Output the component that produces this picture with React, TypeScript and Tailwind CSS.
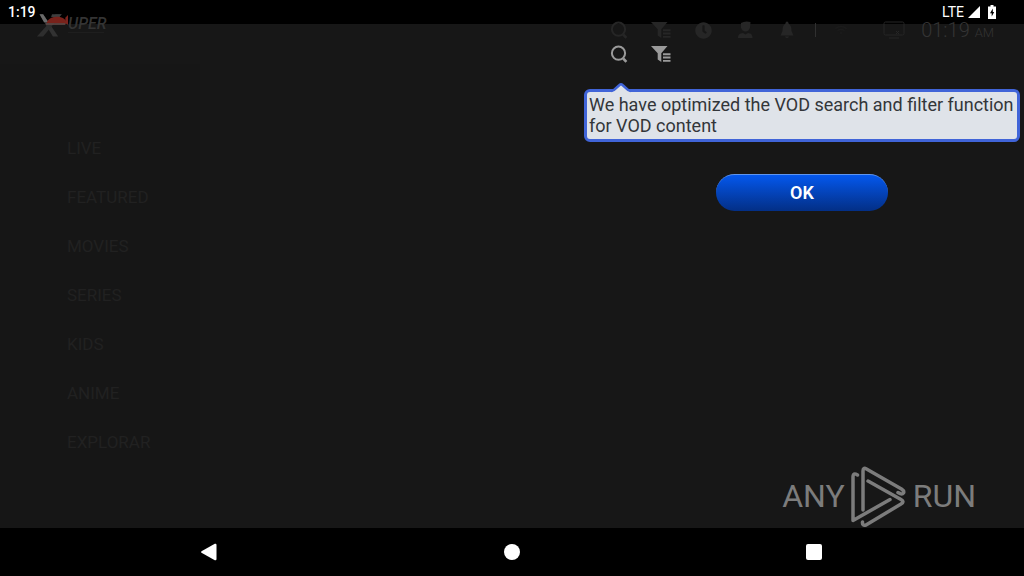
import { FaClock, FaWifi } from "react-icons/fa";

const menuItems = [
  "LIVE",
  "FEATURED",
  "MOVIES",
  "SERIES",
  "KIDS",
  "ANIME",
  "EXPLORAR",
];

const SearchIcon = () => (
  <svg className="h-5 w-5" viewBox="0 0 20 20" fill="none" stroke="currentColor">
    <circle cx="9.5" cy="9.2" r="6.6" strokeWidth="2" />
    <path d="M14.2 14.5L17.4 17.8" strokeWidth="2.6" />
  </svg>
);

const FilterIcon = () => (
  <svg className="h-5 w-5" viewBox="0 0 20 20" fill="currentColor">
    <path d="M0 2H16.5L10.3 9.3V18L6.7 15.5V9.3Z" />
    <path d="M12 9.3H19.5V11.2H12ZM12 12.6H19.5V14.5H12ZM12 15.9H19.5V17.8H12Z" />
  </svg>
);

const UserIcon = () => (
  <svg className="h-5 w-5" viewBox="0 0 20 20" fill="currentColor">
    <path d="M6 3Q10 0.5 15.5 2L15 7.5C14.5 10 12.5 11.500 10.5 11.5S6.500 10 6 7.5Z" />
    <path d="M3 18C3 14.5 5 13.4 8 13L10.5 14.5L13 13C16 13.4 17.500 14.5 17.5 18Z" />
  </svg>
);

const BellIcon = () => (
  <svg className="h-5 w-5" viewBox="0 0 20 20" fill="currentColor">
    <path d="M10 1.500C11 1.500 11.500 2.500 11.500 3.500C14 5 14.500 8 14.500 11L16.500 15.500H3.500L5.500 11C5.500 8 6 5 8.500 3.500C8.500 2.500 9 1.500 10 1.500Z" />
    <path d="M8 16.500H12Q11.500 18 10 18T8 16.500Z" />
  </svg>
);

const MonitorIcon = () => (
  <svg className="h-5 w-[22px]" viewBox="0 0 22 20" fill="none" stroke="currentColor">
    <rect x="1" y="2" width="20" height="13" rx="1.5" />
    <path d="M6 18H16M13 11L16 14M16 11L13 14" />
  </svg>
);

const XuperLogo = () => (
  <div className="flex items-start" aria-label="Xuper">
    <svg className="h-8 w-8" viewBox="0 0 36 32">
      <path d="M4 5H8L25 30H19Z" fill="#323232" />
      <path d="M22 5H29L8 30H1L12 18Z" fill="#2e2e2e" />
      <path d="M4 5H8L14 14H9Z" fill="#6a6a6a" />
      <path d="M18 5H29L26 8H17Z" fill="#3e3e3e" />
      <path d="M12 15C13 9 21 7 27 8C32 9 34 12 35 16L12 15Z" fill="#78221b" />
      <path d="M33 9L36 6V17L33 14Z" fill="#7a241e" />
      <path d="M11 16H33" stroke="#5a4644" strokeWidth="2" />
    </svg>
    <div className="flex flex-col pt-2 text-[#343434]">
      <span className="text-base leading-4 font-medium italic">UPER</span>
      <span className="h-px w-9 bg-[#1e1e1e]" />
    </div>
  </div>
);

const StatusBar = () => (
  <div className="absolute inset-x-0 top-0 flex h-6 items-center bg-black pr-7 pl-2 text-sm text-white">
    <span className="font-medium">1:19</span>
    <div className="ml-auto flex items-center gap-1">
      <span>LTE</span>
      <svg className="h-3 w-3" viewBox="0 0 12 12" fill="currentColor">
        <path d="M12 0V12H0Z" />
      </svg>
      <svg className="ml-1 h-[14px] w-2" viewBox="0 0 8 14">
        <path d="M2.5 0H5.5V1.5H8V14H0V1.5H2.5Z" fill="white" />
        <path d="M4.8 3.5L2 8.2H3.7V11.5L6.2 7H4.8Z" fill="black" />
      </svg>
    </div>
  </div>
);

const Header = () => (
  <header className="relative flex items-start justify-between pt-2 pr-[30px] pl-9 text-[#262626]">
    <XuperLogo />
    <div className="flex h-11 items-center">
      {[
        { label: "Search", icon: <SearchIcon /> },
        { label: "Filter", icon: <FilterIcon /> },
        { label: "History", icon: <FaClock className="h-[17px] w-[17px]" /> },
        { label: "Account", icon: <UserIcon /> },
        { label: "Notifications", icon: <BellIcon /> },
      ].map((action) => (
        <button
          key={action.label}
          aria-label={action.label}
          className="flex w-[42px] justify-center"
        >
          {action.icon}
        </button>
      ))}
      <span className="mx-[7px] h-[14px] w-px bg-[#303030]" />
      <FaWifi className="mx-3 h-3 w-3 text-[#1b1b1b]" />
      <span className="mr-4 ml-6">
        <MonitorIcon />
      </span>
      <span className="text-xl font-light text-[#343434]">
        01:19 <span className="text-[13px]">AM</span>
      </span>
    </div>
  </header>
);

const SideMenu = () => (
  <nav className="w-[200px] bg-[#161616] pt-[72px] pl-[67px]">
    <ul>
      {menuItems.map((item) => (
        <li key={item} className="h-[49px]">
          <a href="#" className="text-[17px] leading-6 text-[#212121]">
            {item}
          </a>
        </li>
      ))}
    </ul>
  </nav>
);

// Feature hint shown over the dimmed home screen
const SearchTip = () => (
  <div
    role="dialog"
    aria-label="Search and filter"
    className="absolute top-11 right-1 flex w-[436px] flex-col"
  >
    <div className="flex pl-[14px] text-[#9a9a9a]">
      <span className="flex w-[42px] justify-center">
        <SearchIcon />
      </span>
      <span className="flex w-[42px] justify-center">
        <FilterIcon />
      </span>
    </div>
    <div className="relative mt-[25px] rounded-md border-[3px] border-[#4064d8] bg-[#dfe3e9] px-[2px] pt-[2px] pb-[3px]">
      <svg
        className="absolute -top-[10px] left-6 h-[11px] w-[20px]"
        viewBox="0 0 20 11"
      >
        <path d="M1 10L10 2L19 10V11H1Z" fill="#dfe3e9" />
        <path
          d="M0 9L3 8L8.5 3Q10 1.5 11.5 3L17 8L20 9"
          fill="none"
          stroke="#4064d8"
          strokeWidth="2.5"
        />
      </svg>
      <p className="text-lg leading-[21px] text-[#333639]">
        We have optimized the VOD search and filter function for VOD content
      </p>
    </div>
    <button className="mt-8 h-[37px] w-[172px] self-center rounded-full border-t border-[#5f95ee] bg-linear-to-b from-[#0458ee] to-[#032f86] text-lg font-semibold text-white">
      OK
    </button>
  </div>
);

const Watermark = () => (
  <div className="absolute right-12 bottom-0 flex items-center text-[32px] leading-none text-[#7c7c7c]">
    <span>ANY</span>
    <svg
      className="mx-1 h-[64px] w-[60px]"
      viewBox="0 0 60 64"
      fill="none"
      stroke="currentColor"
      strokeWidth="3.5"
      strokeLinecap="round"
      strokeLinejoin="round"
    >
      <path d="M8.5 11Q4 8 4 13V56.5L41 35.5" />
      <path d="M14 46V7Q14 3 17.5 5L52.5 25Q55.5 27 54.5 29Q53 31 49 28.5" />
      <path d="M19 17L52 35.5Q56 37.7 52 40L17 61Q13 62 13.5 58" />
    </svg>
    <span>RUN</span>
  </div>
);

const NavigationBar = () => (
  <footer className="grid h-12 grid-cols-3 items-center justify-items-center bg-black px-[59px] text-white">
    <button aria-label="Back">
      <svg className="h-[18px] w-[18px]" viewBox="0 0 18 18" fill="currentColor">
        <path d="M0.5 8.2L13.8 0.8Q15.5 0.2 15.5 2V16Q15.5 17.8 13.8 17.2L0.5 9.8Q-0.3 9 0.5 8.2Z" />
      </svg>
    </button>
    <button aria-label="Home" className="h-4 w-4 rounded-full bg-white" />
    <button aria-label="Recent apps" className="h-4 w-4 rounded-xs bg-white" />
  </footer>
);

export default function App() {
  return (
    <div className="flex min-h-screen flex-col bg-black font-[Roboto,sans-serif]">
      <div className="relative flex flex-1 flex-col bg-[#171717]">
        <StatusBar />
        <Header />
        <main className="flex flex-1 pt-3">
          <SideMenu />
        </main>
        <SearchTip />
        <Watermark />
      </div>
      <NavigationBar />
    </div>
  );
}
